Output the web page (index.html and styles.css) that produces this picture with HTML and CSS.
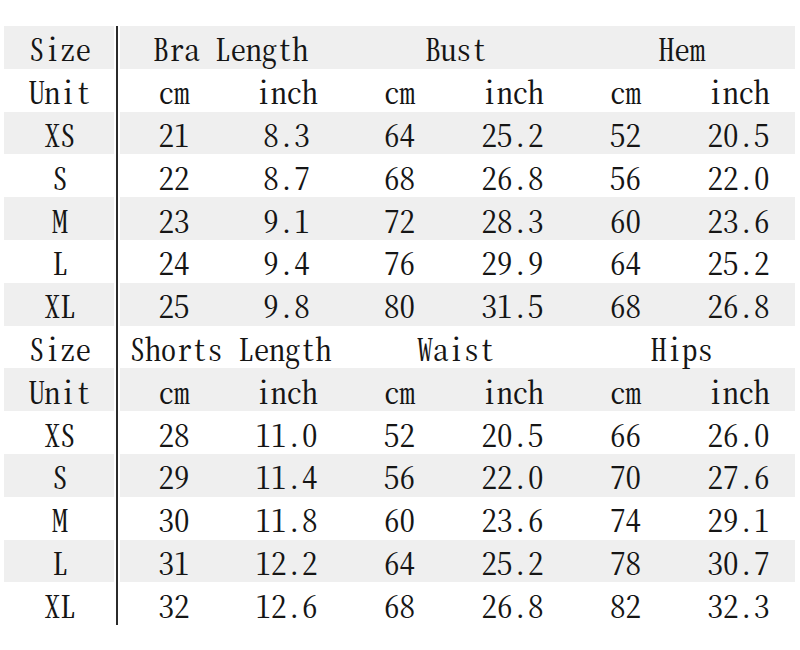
FILE: index.html
```html
<!DOCTYPE html>
<html>
<head>
<meta charset="utf-8">
<link rel="stylesheet" href="styles.css">
</head>
<body>
<table class="chart">
  <colgroup>
    <col class="c-size"><col><col><col><col><col><col>
  </colgroup>
  <tbody>
    <tr class="shade"><td class="lab">Size</td><td class="head" colspan="2">Bra Length</td><td class="head" colspan="2">Bust</td><td class="head" colspan="2">Hem</td></tr>
    <tr><td class="lab">Unit</td><td>cm</td><td>inch</td><td>cm</td><td>inch</td><td>cm</td><td>inch</td></tr>
    <tr class="shade"><td class="lab">XS</td><td>21</td><td>8.3</td><td>64</td><td>25.2</td><td>52</td><td>20.5</td></tr>
    <tr><td class="lab">S</td><td>22</td><td>8.7</td><td>68</td><td>26.8</td><td>56</td><td>22.0</td></tr>
    <tr class="shade"><td class="lab">M</td><td>23</td><td>9.1</td><td>72</td><td>28.3</td><td>60</td><td>23.6</td></tr>
    <tr><td class="lab">L</td><td>24</td><td>9.4</td><td>76</td><td>29.9</td><td>64</td><td>25.2</td></tr>
    <tr class="shade"><td class="lab">XL</td><td>25</td><td>9.8</td><td>80</td><td>31.5</td><td>68</td><td>26.8</td></tr>
    <tr><td class="lab">Size</td><td class="head" colspan="2">Shorts Length</td><td class="head" colspan="2">Waist</td><td class="head" colspan="2">Hips</td></tr>
    <tr class="shade"><td class="lab">Unit</td><td>cm</td><td>inch</td><td>cm</td><td>inch</td><td>cm</td><td>inch</td></tr>
    <tr><td class="lab">XS</td><td>28</td><td>11.0</td><td>52</td><td>20.5</td><td>66</td><td>26.0</td></tr>
    <tr class="shade"><td class="lab">S</td><td>29</td><td>11.4</td><td>56</td><td>22.0</td><td>70</td><td>27.6</td></tr>
    <tr><td class="lab">M</td><td>30</td><td>11.8</td><td>60</td><td>23.6</td><td>74</td><td>29.1</td></tr>
    <tr class="shade"><td class="lab">L</td><td>31</td><td>12.2</td><td>64</td><td>25.2</td><td>78</td><td>30.7</td></tr>
    <tr><td class="lab">XL</td><td>32</td><td>12.6</td><td>68</td><td>26.8</td><td>82</td><td>32.3</td></tr>
  </tbody>
</table>
</body>
</html>
```

FILE: styles.css
```css
html, body {
  margin: 0;
  padding: 0;
  background: #ffffff;
}

body {
  padding: 26px 0 0 4px;
  font-family: "Noto Serif CJK SC", "Liberation Serif", serif;
  color: #151515;
}

.chart {
  width: 791px;
  table-layout: fixed;
  border-collapse: collapse;
  border-spacing: 0;
}

.chart col {
  width: 113px;
}

.chart td {
  height: 42.8px;
  padding: 2px 0 0 0;
  box-sizing: border-box;
  text-align: center;
  vertical-align: middle;
  font-family: "Noto Serif CJK SC", "Liberation Serif", serif;
  font-feature-settings: "hwid" 1;
  font-size: 31px;
  line-height: 32px;
  white-space: nowrap;
}

.chart tr.shade td {
  background: #efefef;
}

.chart td.lab {
  border-right: 2px solid #2b2b2b;
  box-shadow: inset -2px 0 0 #ffffff;
}

.chart td.lab + td {
  box-shadow: inset 2px 0 0 #ffffff;
}
```
